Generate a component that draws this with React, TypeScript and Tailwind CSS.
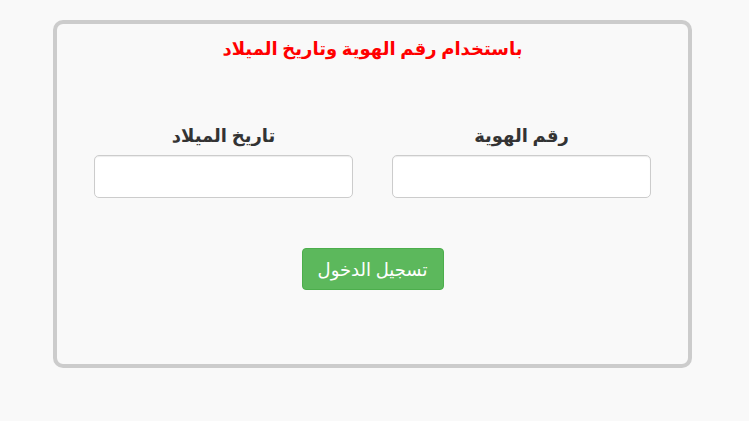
export default function App() {
  return (
    <main
      dir="rtl"
      className="min-h-[421px] w-full bg-[#f9f9f9] pt-5"
      style={{ fontFamily: '"Noto Sans", "DejaVu Sans", sans-serif' }}
    >
      <div className="mr-[57px] h-[348px] w-[639px] rounded-[10px] border-4 border-[#cccccc] bg-[#f9f9f9] px-[37px] pt-[11px]">
        <h1 className="text-center text-[18px] font-semibold leading-[26px] text-[#ff0000]">
          باستخدام رقم الهوية وتاريخ الميلاد
        </h1>

        <div className="mt-[62px] grid grid-cols-2 gap-[39px]">
          <div className="flex flex-col items-center">
            <label className="text-[18px] font-bold leading-[24px] text-[#333333]">رقم الهوية</label>
            <input className="mt-[8px] h-[43px] w-full rounded-[5px] border border-[#cccccc] bg-white shadow-[inset_0_1px_1px_rgba(0,0,0,0.075)] outline-none" />
          </div>
          <div className="flex flex-col items-center">
            <label className="text-[18px] font-bold leading-[24px] text-[#333333]">تاريخ الميلاد</label>
            <input className="mt-[8px] h-[43px] w-full rounded-[5px] border border-[#cccccc] bg-white shadow-[inset_0_1px_1px_rgba(0,0,0,0.075)] outline-none" />
          </div>
        </div>

        <div className="mt-[50px] flex justify-center">
          <button className="h-[42px] w-[142px] rounded-[4px] border border-[#4cae4c] bg-[#5cb85c] text-[18px] leading-none text-white">
            تسجيل الدخول
          </button>
        </div>
      </div>
    </main>
  );
}
